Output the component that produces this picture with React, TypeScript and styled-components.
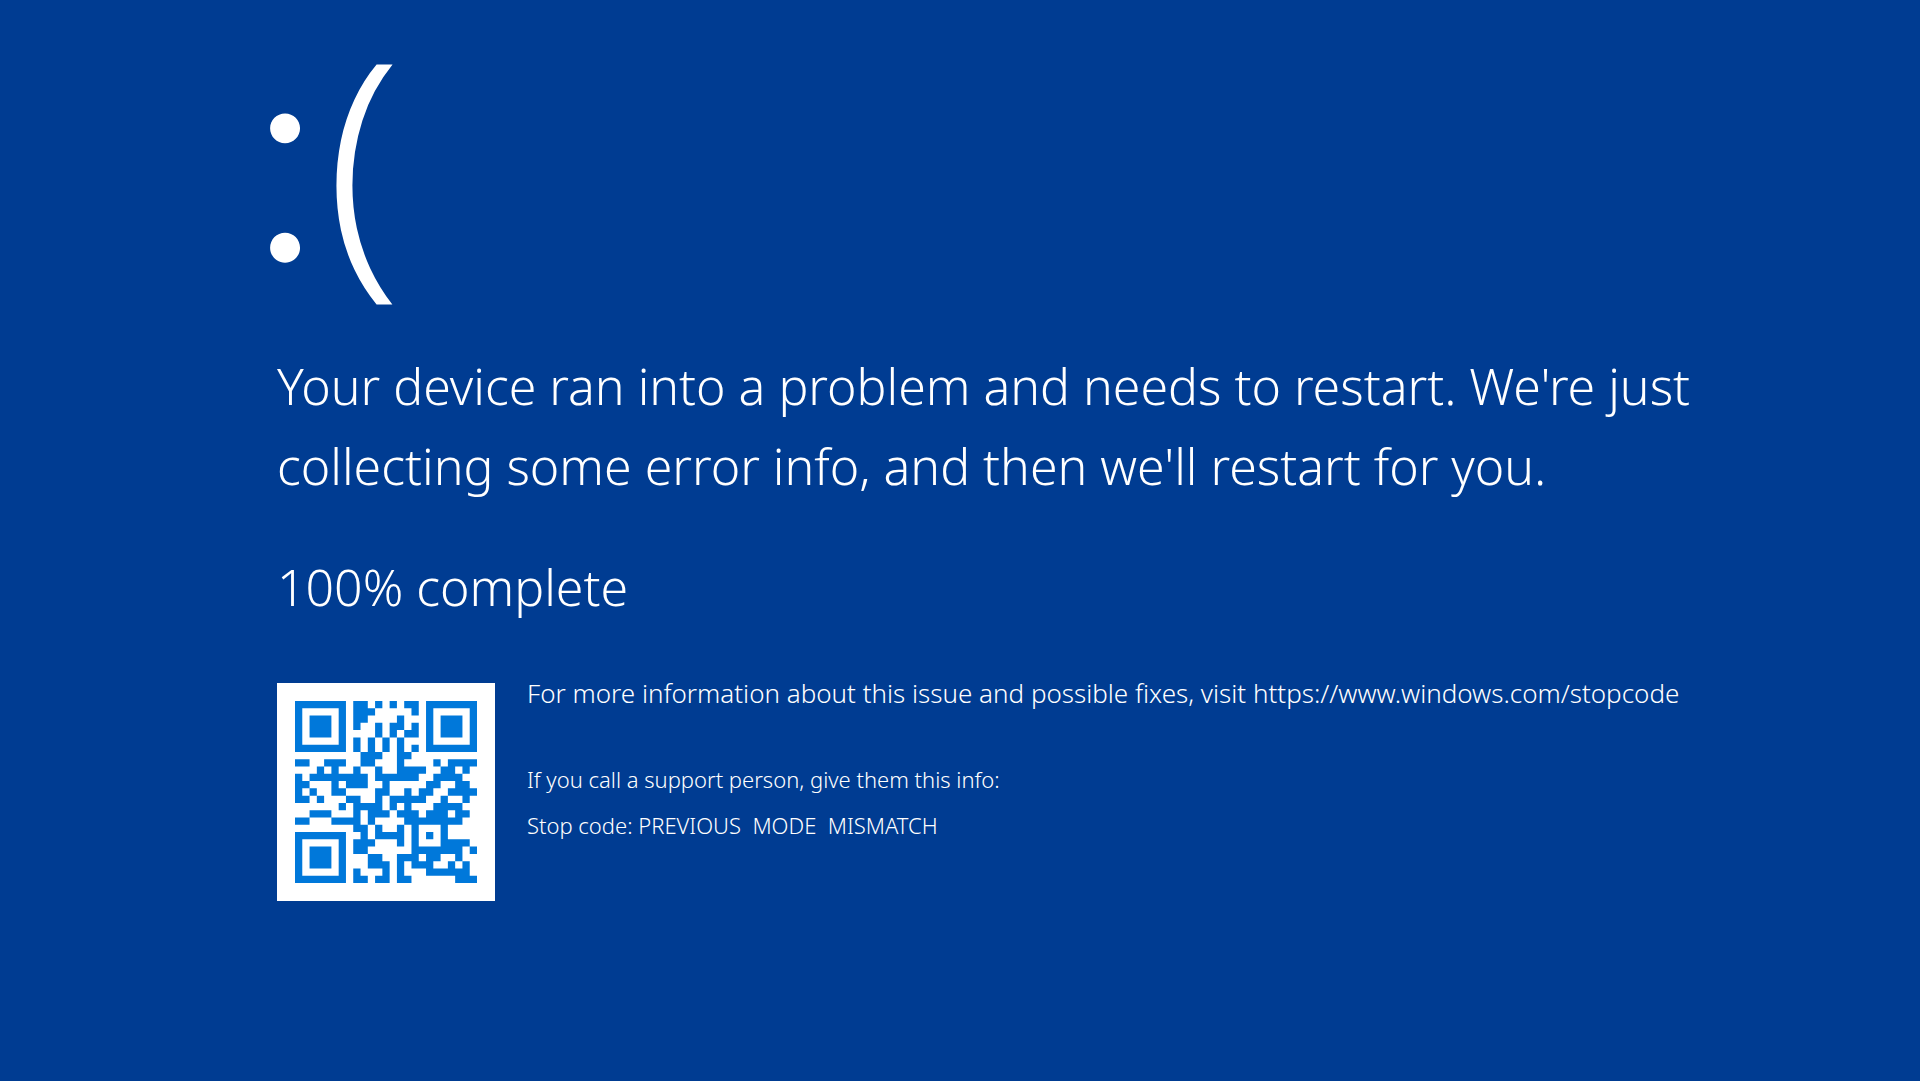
import React from "react";
import styled, { createGlobalStyle } from "styled-components";

const GlobalStyle = createGlobalStyle`
  * { box-sizing: border-box; }
  body {
    margin: 0;
    background: #003c92;
    color: #fff;
    font-family: "Noto Sans", "Open Sans", sans-serif;
    font-weight: 300;
  }
`;

const Screen = styled.main`
  min-height: 100vh;
  padding: 5px 200px 0 277px;
  background: #003c92;
`;

const Face = styled.div`
  display: flex;
  align-items: baseline;
  margin-left: -32px;
  font-size: 275px;
  line-height: 300px;
  height: 300px;
`;

const Eyes = styled.span`
  font-family: "Inter", sans-serif;
  font-size: 284px;
`;

const Message = styled.h1`
  margin: 41px 0 0;
  max-width: 1443px;
  font-size: 50px;
  font-weight: 300;
  line-height: 80px;
`;

const Progress = styled.p`
  margin: 41px 0 0;
  font-size: 50px;
  line-height: 80px;
`;

const Details = styled.section`
  display: flex;
  align-items: flex-start;
  gap: 32px;
  margin-top: 56px;
`;

const QrFrame = styled.div`
  flex: none;
  width: 218px;
  padding: 18px;
  background: #fff;
`;

const QrImage = styled.svg`
  display: block;
  width: 100%;
  fill: #0078da;
`;

const Info = styled.div`
  display: flex;
  flex-direction: column;
`;

const Visit = styled.p`
  margin: 0 0 53px;
  font-size: 26px;
  line-height: 20px;
`;

const StopLink = styled.a`
  color: inherit;
  text-decoration: none;
`;

const Support = styled.p`
  margin: 0;
  font-size: 22px;
  line-height: 46px;
  white-space: pre-wrap;
`;

const QR_ROWS = [
  "1111111011010101101111111",
  "1000001011100000101000001",
  "1011101011000010001011101",
  "1011101010010110101011101",
  "1011101000010101101011101",
  "1000001010101010001000001",
  "1111111010101010101111111",
  "0000000001110011000000000",
  "1100111001100010000101111",
  "0001010010010011110011010",
  "1011111111011111100111100",
  "1100010111001000001100110",
  "1010011000011001011001111",
  "1101000110010111110010010",
  "0000001011110101000111100",
  "0011100010111011101110110",
  "1100011110100001111111100",
  "0000000011010010100010000",
  "1111111001011110101010000",
  "1000001011100010100011110",
  "1011101011000000111111101",
  "1011101000110011101100100",
  "1011101000111010111001010",
  "1000001010001010001111110",
  "1111111011011011000000111",
];

const QR_PATH = QR_ROWS.map((row, y) =>
  Array.from(row.matchAll(/1+/g))
    .map((run) => `M${run.index} ${y}h${run[0].length}v1h-${run[0].length}z`)
    .join("")
).join("");

function QrCode() {
  return (
    <QrFrame>
      <QrImage viewBox="0 0 25 25" role="img" aria-label="QR code" shapeRendering="geometricPrecision">
        <path d={QR_PATH} />
      </QrImage>
    </QrFrame>
  );
}

export default function App() {
  return (
    <>
      <GlobalStyle />
      <Screen>
        <Face>
          <Eyes>:</Eyes>
          <span>(</span>
        </Face>
        <Message>
          Your device ran into a problem and needs to restart. We're just collecting some error info, and then we'll
          restart for you.
        </Message>
        <Progress>100% complete</Progress>
        <Details>
          <QrCode />
          <Info>
            <Visit>
              For more information about this issue and possible fixes, visit{" "}
              <StopLink href="https://www.windows.com/stopcode">https://www.windows.com/stopcode</StopLink>
            </Visit>
            <Support>If you call a support person, give them this info:</Support>
            <Support>{"Stop code: PREVIOUS  MODE  MISMATCH"}</Support>
          </Info>
        </Details>
      </Screen>
    </>
  );
}
